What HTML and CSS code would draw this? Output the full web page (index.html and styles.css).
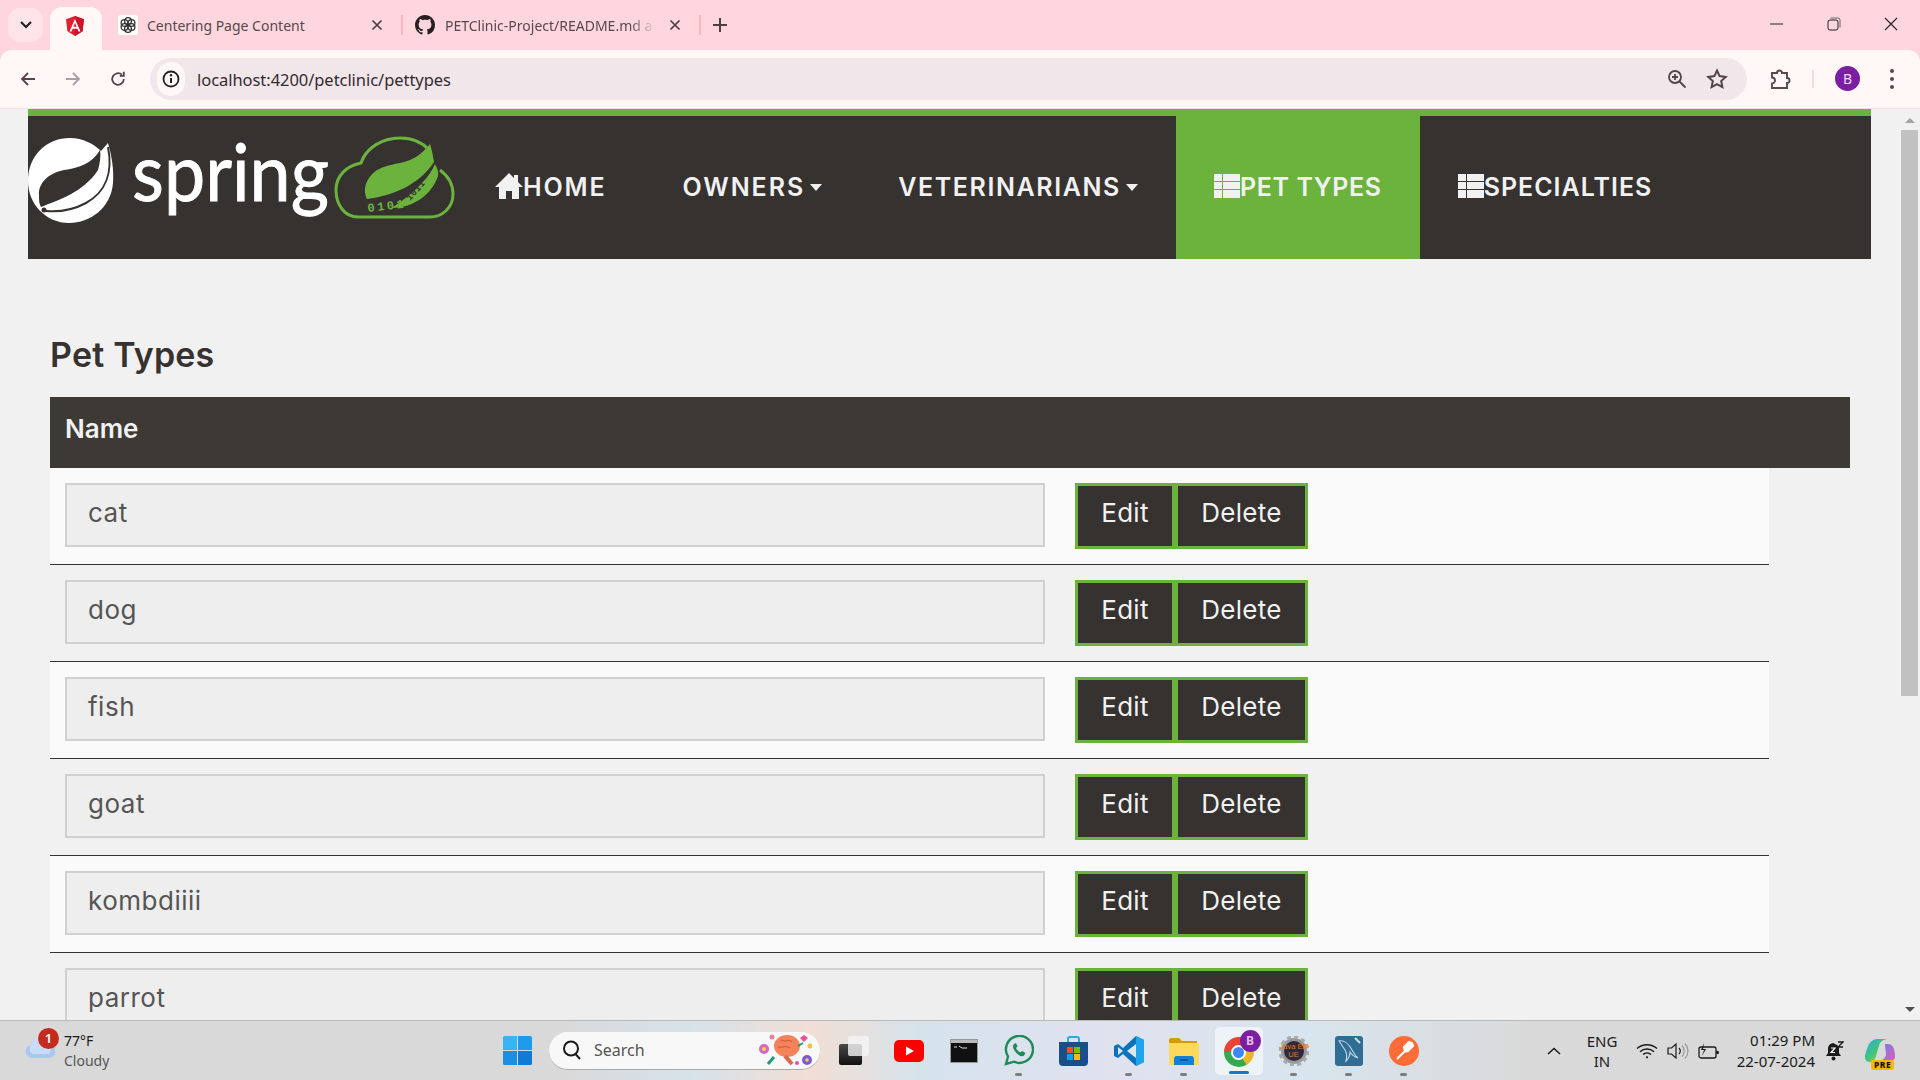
FILE: index.html
```html
<!DOCTYPE html>
<html lang="en">
<head>
<meta charset="utf-8">
<title>PetClinic</title>
<link rel="stylesheet" href="styles.css">
</head>
<body>
<div class="tabstrip">
  <div class="tab-menu"><svg width="14" height="10" viewBox="0 0 14 10"><path d="M2 2l5 5 5-5" fill="none" stroke="#222" stroke-width="2.2"/></svg></div>
  <div class="tab-active"><svg width="22" height="22" viewBox="0 0 22 22"><path d="M11 1L2 4.200l1.400 12L11 21l7.600-4.800 1.400-12z" fill="#e0202f"/><path d="M11 1v20l7.600-4.800 1.400-12z" fill="#c9142b"/><path d="M11 4L5.500 16.500h2l1.100-2.800h4.800l1.100 2.800h2zM9.400 11.800L11 8l1.600 3.800z" fill="#fff"/></svg></div>
  <div class="tab tab-chat">
    <span class="favicon-white"><svg width="18" height="18" viewBox="0 0 18 18" fill="none" stroke="#333" stroke-width="1.300"><circle cx="9" cy="5" r="3.400"/><circle cx="5.500" cy="7" r="3.400"/><circle cx="5.500" cy="11" r="3.400"/><circle cx="9" cy="13" r="3.400"/><circle cx="12.500" cy="11" r="3.400"/><circle cx="12.500" cy="7" r="3.400"/></svg></span>
    <span class="tab-title">Centering Page Content</span>
    <svg class="tab-x" width="12" height="12" viewBox="0 0 12 12"><path d="M1.500 1.500l9 9M10.500 1.500l-9 9" stroke="#4a3f42" stroke-width="1.700"/></svg>
  </div>
  <span class="tab-sep"></span>
  <div class="tab tab-git">
    <svg width="20" height="20" viewBox="0 0 16 16"><path fill="#241f21" d="M8 0C3.580 0 0 3.580 0 8c0 3.540 2.290 6.530 5.470 7.590.4.070.55-.17.55-.38 0-.19-.01-.82-.01-1.490-2.010.37-2.530-.49-2.690-.94-.09-.23-.48-.94-.82-1.130-.28-.15-.68-.52-.01-.53.63-.01 1.080.58 1.230.82.72 1.210 1.870.87 2.330.66.070-.52.28-.87.51-1.070-1.780-.2-3.640-.89-3.640-3.950 0-.87.31-1.590.82-2.150-.08-.2-.36-1.020.08-2.120 0 0 .67-.21 2.200.82.64-.18 1.320-.27 2-.27s1.360.09 2 .27c1.530-1.040 2.200-.82 2.200-.82.44 1.100.16 1.920.08 2.120.51.56.82 1.270.82 2.150 0 3.070-1.870 3.750-3.650 3.950.29.25.54.73.54 1.480 0 1.070-.01 1.930-.01 2.200 0 .21.15.46.55.38A8.010 8.010 0 0016 8c0-4.420-3.580-8-8-8z"/></svg>
    <span class="tab-title tab-title-fade">PETClinic-Project/README.md a</span>
    <svg class="tab-x" width="12" height="12" viewBox="0 0 12 12"><path d="M1.500 1.500l9 9M10.500 1.500l-9 9" stroke="#4a3f42" stroke-width="1.700"/></svg>
  </div>
  <span class="tab-sep"></span>
  <svg class="tab-plus" width="14" height="14" viewBox="0 0 14 14"><path d="M7 0v14M0 7h14" stroke="#4a3f42" stroke-width="2"/></svg>
  <div class="window-controls">
    <span class="win-btn"><svg width="14" height="2" viewBox="0 0 14 2"><path d="M0 1h13" stroke="#222" stroke-width="1"/></svg></span>
    <span class="win-btn"><svg width="14" height="14" viewBox="0 0 14 14" fill="none" stroke="#222"><rect x="1" y="3" width="10" height="10" rx="2"/><path d="M3.500 1H11a2 2 0 012 2v7.500" stroke="#666"/></svg></span>
    <span class="win-btn"><svg width="14" height="14" viewBox="0 0 14 14"><path d="M1 1l12 12M13 1L1 13" stroke="#222" stroke-width="1.100"/></svg></span>
  </div>
</div>

<div class="toolbar">
  <span class="tool-btn"><svg width="18" height="18" viewBox="0 0 18 18" fill="none" stroke="#534448" stroke-width="1.800"><path d="M16 9H3M9 3L3 9l6 6"/></svg></span>
  <span class="tool-btn"><svg width="18" height="18" viewBox="0 0 18 18" fill="none" stroke="#a89fa1" stroke-width="1.800"><path d="M2 9h13M9 3l6 6-6 6"/></svg></span>
  <span class="tool-btn"><svg width="18" height="18" viewBox="0 0 18 18" fill="none" stroke="#534448" stroke-width="1.800"><path d="M14.800 9a5.800 5.800 0 11-1.900-4.300"/><path d="M14.800 1.800v4h-4" stroke-width="1.800"/></svg></span>
  <div class="omnibox">
    <span class="site-info"><svg width="18" height="18" viewBox="0 0 18 18"><circle cx="9" cy="9" r="7.500" fill="none" stroke="#222" stroke-width="1.800"/><path d="M9 8v5" stroke="#222" stroke-width="2"/><circle cx="9" cy="5.300" r="1.200" fill="#222"/></svg></span>
    <span class="url">localhost:4200/petclinic/pettypes</span>
    <span class="omni-right">
      <svg width="20" height="20" viewBox="0 0 20 20" fill="none" stroke="#534448" stroke-width="1.800"><circle cx="8" cy="8" r="6"/><path d="M12.500 12.500l6 6M8 5v6M5 8h6"/></svg>
      <svg width="22" height="22" viewBox="0 0 22 22" fill="none" stroke="#534448" stroke-width="2"><path d="M11 2.500l2.600 5.600 6.100.8-4.500 4.200 1.200 6.100L11 16.200l-5.400 3 1.200-6.100-4.500-4.200 6.100-.8z"/></svg>
    </span>
  </div>
  <span class="ext-btn"><svg width="22" height="22" viewBox="0 0 22 22" fill="none" stroke="#5a474b" stroke-width="1.900"><path d="M3 5h5a2.500 2.500 0 015 0h5v5a2.500 2.500 0 010 5v5H3v-4.500a3 3 0 000-6z"/></svg></span>
  <span class="tool-sep"></span>
  <span class="avatar">B</span>
  <span class="menu-btn"><i></i><i></i><i></i></span>
</div>

<div class="viewport">
  <div class="page">
    <nav class="navbar">
      <a class="brand">
        <svg width="429" height="143" viewBox="0 0 429 143">
          <g transform="translate(0 22)">
            <path fill="#fff" d="M80 5C84 19 86 32 85 45C83 70 62 85 41 85C18 85 0 66 0 43C0 18 18 0 42 0C55 0 66 6 73 13Z"/>
            <path fill="#363230" d="M72 12C64 26 50 30 36 32C20 35 10 46 11 57C11 62 11 66 13 69C30 62 55 55 70 32C72 25 73 18 72 12Z"/>
            <path fill="none" stroke="#363230" stroke-width="2" d="M80 9C85 34 78 54 58 65C45 72 30 74 18 73"/>
            <circle cx="16" cy="72" r="2.500" fill="#363230"/>
          </g>
          <text class="logo-word" x="104" y="85" textLength="197" lengthAdjust="spacingAndGlyphs">spring</text>
          <path fill="none" stroke="#6cb33e" stroke-width="3" d="M402 101H330C316 101 308 88 308 74C308 60 318 50 333 47C338 32 354 22 372 22C384 22 394 26 401 34M412 54C420 60 425 68 425 78C425 92 414 101 402 101"/>
          <path fill="#6cb33e" d="M402 28C394 38 386 44 372 47C358 50 344 52 338 68C336 74 337 79 339 83C365 80 392 68 406 46C405 40 404 34 402 28Z"/>
          <path fill="#6cb33e" d="M407 48C398 68 378 82 364 92C386 92 404 78 410 60C411 56 409 52 407 48Z"/>
          <text class="logo-bits logo-bits-green" x="340" y="96" transform="rotate(-7 340 96)">0101</text>
          <text class="logo-bits logo-bits-dark" x="382" y="85" transform="rotate(-48 382 85)">1011</text>
        </svg>
      </a>
      <a class="nav-link">
        <svg class="nav-icon" width="28" height="28" viewBox="0 0 28 28"><path fill="#f1f1f1" d="M14 1L0 15h4v12h7v-8h6v8h7V15h4l-5-5V3h-4v3z"/></svg>
        <span class="label label-home">HOME</span>
      </a>
      <a class="nav-link"><span class="label label-owners">OWNERS</span><i class="caret"></i></a>
      <a class="nav-link"><span class="label label-vets">VETERINARIANS</span><i class="caret"></i></a>
      <a class="nav-link nav-link-active">
        <svg class="nav-icon" width="26" height="24" viewBox="0 0 26 24"><path fill="#f1f1f1" d="M0 0h8v7H0zM9 0h17v7H9zM0 8h8v7H0zM9 8h17v7H9zM0 16h8v8H0zM9 16h17v8H9z"/></svg>
        <span class="label label-pets">PET TYPES</span>
      </a>
      <a class="nav-link">
        <svg class="nav-icon" width="26" height="24" viewBox="0 0 26 24"><path fill="#f1f1f1" d="M0 0h8v7H0zM9 0h17v7H9zM0 8h8v7H0zM9 8h17v7H9zM0 16h8v8H0zM9 16h17v8H9z"/></svg>
        <span class="label label-spec">SPECIALTIES</span>
      </a>
    </nav>

    <main class="content">
      <h2 class="title">Pet Types</h2>
      <div class="table-head">Name</div>
      <div class="row"><div class="field">cat</div><div class="actions"><button class="btn btn-edit">Edit</button><button class="btn btn-delete">Delete</button></div></div>
      <div class="row"><div class="field">dog</div><div class="actions"><button class="btn btn-edit">Edit</button><button class="btn btn-delete">Delete</button></div></div>
      <div class="row"><div class="field">fish</div><div class="actions"><button class="btn btn-edit">Edit</button><button class="btn btn-delete">Delete</button></div></div>
      <div class="row"><div class="field">goat</div><div class="actions"><button class="btn btn-edit">Edit</button><button class="btn btn-delete">Delete</button></div></div>
      <div class="row"><div class="field">kombdiiii</div><div class="actions"><button class="btn btn-edit">Edit</button><button class="btn btn-delete">Delete</button></div></div>
      <div class="row"><div class="field">parrot</div><div class="actions"><button class="btn btn-edit">Edit</button><button class="btn btn-delete">Delete</button></div></div>
    </main>
  </div>
  <div class="scrollbar">
    <i class="arrow-up"></i>
    <i class="thumb"></i>
    <i class="arrow-down"></i>
  </div>
</div>

<footer class="taskbar">
  <div class="weather">
    <svg class="weather-icon" width="30" height="24" viewBox="0 0 30 24"><path fill="#a9c8f0" d="M7 23a6.500 6.500 0 01-1-12.900A9 9 0 0123 8a7.500 7.500 0 011 15z"/><path fill="#c9dcf6" d="M7 19a6.500 6.500 0 01-1-9A9 9 0 0123 8a7.500 7.500 0 011 11z"/></svg>
    <span class="weather-badge">1</span>
    <div class="weather-text"><span class="temp">77°F</span><span class="cond">Cloudy</span></div>
  </div>
  <span class="slot"><svg width="29" height="29" viewBox="0 0 29 29"><path fill="#35b6f2" d="M0 1.500A1.500 1.500 0 011.500 0H14v14H0z"/><path fill="#1e9bea" d="M15 0h12.500A1.500 1.500 0 0129 1.500V14H15z"/><path fill="#1a8fe3" d="M0 15h14v14H1.500A1.500 1.500 0 010 27.500z"/><path fill="#0f7bd4" d="M15 15h14v12.500a1.500 1.500 0 01-1.500 1.500H15z"/></svg></span>
  <div class="search">
    <svg width="22" height="22" viewBox="0 0 22 22" fill="none" stroke="#1a1a1a" stroke-width="2"><circle cx="10" cy="9.500" r="7"/><path d="M14.500 15l4.500 5"/></svg>
    <span class="search-text">Search</span>
    <svg class="search-art" width="54" height="36" viewBox="0 0 54 36">
      <circle cx="6" cy="17" r="5" fill="#d765c9"/><circle cx="6" cy="17" r="2" fill="#f7d34f"/>
      <circle cx="14" cy="5" r="2.500" fill="#ee7fa0"/>
      <path d="M10 32l6-7" stroke="#1e9a7a" stroke-width="3"/>
      <ellipse cx="29" cy="14" rx="13" ry="11" fill="#f4835c"/><path d="M27 24l7 8" stroke="#d96a48" stroke-width="4"/>
      <path d="M23 8c4 3 8-2 11 2M20 15c5 1 7-2 12 1" stroke="#d8603c" stroke-width="1.300" fill="none"/>
      <path d="M46 3l4 3-4 4-4-4z" fill="#ef4f9c"/><path d="M40 14l5-3" stroke="#1e9a7a" stroke-width="2"/>
      <circle cx="52" cy="14" r="2.500" fill="#f0c040"/>
      <circle cx="49" cy="28" r="5" fill="#7c5bd6"/><circle cx="49" cy="28" r="1.800" fill="#f7d34f"/>
      <circle cx="39" cy="31" r="2" fill="#ef4f9c"/>
    </svg>
  </div>
  <div class="apps">
    <span class="slot"><span class="taskview"><i class="tv-back"></i><i class="tv-front"></i></span></span>
    <span class="slot"><svg width="30" height="22" viewBox="0 0 30 22"><rect width="30" height="22" rx="5" fill="#f00"/><path d="M12 6.500v9l8-4.500z" fill="#fff"/></svg></span>
    <span class="slot"><svg width="28" height="24" viewBox="0 0 28 24"><rect x=".5" y=".5" width="27" height="23" fill="#111" stroke="#999"/><rect x="1" y="1" width="26" height="3" fill="#bbb"/><path d="M4 8h3M9 7l3 2h5" stroke="#ddd" stroke-width="1" fill="none"/></svg></span>
    <span class="slot slot-open"><svg width="30" height="31" viewBox="0 0 30 31" fill="none"><path d="M2 29l2-7.500A13.500 13.500 0 1110 26.700z" stroke="#1f8a55" stroke-width="2.400"/><path d="M10 9c-2 2-1 5 2 8.500s6 4.500 8 3l1.500-2.500-3.500-2-1.500 1.500c-2-.8-3.800-2.800-4.500-4.500l1.500-1.500L12 8z" fill="#1f8a55"/></svg></span>
    <span class="slot"><svg width="29" height="30" viewBox="0 0 29 30"><path d="M9 7V3a2 2 0 012-2h7a2 2 0 012 2v4" fill="none" stroke="#2aa7e8" stroke-width="2"/><path d="M0 6h29v20a4 4 0 01-4 4H4a4 4 0 01-4-4z" fill="#174f86"/><rect x="8" y="11" width="6" height="6" fill="#f25022"/><rect x="15" y="11" width="6" height="6" fill="#7fba00"/><rect x="8" y="18" width="6" height="6" fill="#00a4ef"/><rect x="15" y="18" width="6" height="6" fill="#ffb900"/></svg></span>
    <span class="slot slot-open"><svg width="30" height="30" viewBox="0 0 30 30"><path d="M22 0l8 4v22l-8 4-13-12-5 4-4-2V10l4-2 5 4z" fill="#0a72bd"/><path d="M22 0l8 4v22l-8 4z" fill="#21a4ee"/><path d="M4 11l5 4-5 4z M22 8v14l-9-7z" fill="#dfe7ee"/></svg></span>
    <span class="slot slot-open"><svg width="30" height="28" viewBox="0 0 30 28"><path d="M0 3a2 2 0 012-2h8l3 3h15v6H0z" fill="#d99a00"/><path d="M0 6h28a2 2 0 012 2v18a2 2 0 01-2 2H2a2 2 0 01-2-2z" fill="#fdd95b"/><path d="M5 28v-6a3 3 0 013-3h14a3 3 0 013 3v6z" fill="#1680d6"/><path d="M11 23h8" stroke="#0a4f8e" stroke-width="1.500"/></svg></span>
    <span class="slot slot-chrome">
      <span class="chrome-logo"><i class="chrome-core"></i></span>
      <span class="chrome-badge">B</span>
    </span>
    <span class="slot slot-open"><span class="javaee"><svg class="gear" width="30" height="30" viewBox="0 0 30 30"><circle cx="15" cy="15" r="11.500" fill="#2e2a3e" stroke="#999" stroke-width="3"/><circle cx="15" cy="15" r="14" fill="none" stroke="#aaa" stroke-width="3" stroke-dasharray="4 3.300"/></svg><span class="javaee-text">Java EE<br>UE</span></span></span>
    <span class="slot slot-open"><svg width="28" height="30" viewBox="0 0 28 30"><rect width="28" height="30" rx="3" fill="#2f6d95"/><path d="M4 5c5-1 10 3 13 9 2 3 3 6 6 8-4-1-6-3-8-6 0 4-2 7-4 9 1-4 1-8-1-11C8 11 6 8 4 5z" fill="none" stroke="#c7dbe7" stroke-width="1.100"/><path d="M20 2l5 5" stroke="#cfe0ea" stroke-width="2"/></svg></span>
    <span class="slot slot-open"><svg width="30" height="30" viewBox="0 0 30 30"><circle cx="15" cy="15" r="15" fill="#ff6c37"/><path d="M8 23l9-9M15 11l5-5 3 1 1 3-5 5-3 .5z" stroke="#fff" stroke-width="2" fill="#fff"/></svg></span>
  </div>
  <div class="tray">
    <svg class="tray-caret" width="14" height="8" viewBox="0 0 14 8"><path d="M1 7l6-5.500L13 7" fill="none" stroke="#1a1a1a" stroke-width="1.500"/></svg>
    <div class="lang"><span>ENG</span><span>IN</span></div>
    <svg class="tray-wifi" width="22" height="16" viewBox="0 0 22 16" fill="none" stroke="#1a1a1a" stroke-width="1.400"><path d="M1 5.500a15 15 0 0120 0M4 8.700a10.500 10.500 0 0114 0M7 11.600a6 6 0 018 0"/><circle cx="11" cy="14.300" r="1.100" fill="#1a1a1a" stroke="none"/></svg>
    <svg class="tray-vol" width="22" height="18" viewBox="0 0 22 18" fill="none" stroke="#1a1a1a" stroke-width="1.200"><path d="M1 6h3.500L9 2v14l-4.500-4H1z"/><path d="M12 6a4.500 4.500 0 010 6"/><path d="M15 3.500a8 8 0 010 11M18 1.500a11 11 0 010 15" stroke="#999"/></svg>
    <svg class="tray-batt" width="22" height="18" viewBox="0 0 22 18" fill="none" stroke="#1a1a1a" stroke-width="1.300"><rect x="1" y="5" width="17" height="11" rx="2"/><path d="M19.500 9v3" stroke-width="2.500"/><path d="M6 1L3 8h3l-2 6 4-7H5z" fill="#1a1a1a" stroke="none"/></svg>
    <div class="clock"><span>01:29 PM</span><span>22-07-2024</span></div>
    <svg class="tray-bell" width="18" height="20" viewBox="0 0 18 20"><path d="M7 2a6 6 0 00-5 6v4l-2 3h15l-2-3V9a5 5 0 00-2-5z" fill="#1a1a1a"/><circle cx="7.500" cy="17.500" r="2" fill="#1a1a1a"/><path d="M5 7h4l-4 4.500h4" stroke="#fff" fill="none" stroke-width="1.200"/><path d="M12 1h5l-5 5h5" stroke="#1a1a1a" fill="none" stroke-width="1.300"/></svg>
    <span class="copilot">
      <svg width="30" height="24" viewBox="0 0 30 24"><defs><linearGradient id="cp1" x1="0" y1="0" x2="1" y2="1"><stop offset="0" stop-color="#28a8ea"/><stop offset=".5" stop-color="#3fc67a"/><stop offset="1" stop-color="#f2c13a"/></linearGradient><linearGradient id="cp2" x1="0" y1="0" x2="1" y2="1"><stop offset="0" stop-color="#6a7cf0"/><stop offset="1" stop-color="#e45fb0"/></linearGradient></defs><path d="M12 0h10c-5 1-7 3-8 7l-3 10c-1 4-3 6-6 6-4 0-6-3-5-7l3-9C5 3 8 0 12 0z" fill="url(#cp1)"/><path d="M20 5h3c3 0 5 2 6 5l1 5c1 4-1 7-5 7H15c3-1 5-3 6-6z" fill="url(#cp2)"/></svg>
      <span class="pre-badge">PRE</span>
    </span>
  </div>
</footer>
</body>
</html>
```
FILE: styles.css
```css
* { box-sizing: border-box; }
html, body { margin: 0; padding: 0; }
body {
  width: 1920px;
  height: 1080px;
  overflow: hidden;
  display: flex;
  flex-direction: column;
  font-family: "Noto Sans", "Open Sans", sans-serif;
  background: #ffd6de;
  color: #222;
}
svg { display: block; flex: none; }

/* Browser tab strip */
.tabstrip { height: 50px; flex: none; display: flex; align-items: center; padding-left: 8px; background: #ffd6de; }
.tab-menu { width: 35px; height: 34px; border-radius: 12px; background: #ffe4e9; display: flex; align-items: center; justify-content: center; }
.tab-active { width: 52px; height: 43px; margin-left: 7px; align-self: flex-end; border-radius: 12px 12px 0 0; background: #fff8f6; display: flex; align-items: center; justify-content: center; padding: 0 2px 6px 0; }
.tab { display: flex; align-items: center; height: 36px; }
.tab-chat { width: 299px; padding: 0 14px 0 16px; }
.tab-git { width: 296px; padding: 0 14px 0 12px; }
.favicon-white { width: 20px; height: 20px; background: #fff; border-radius: 3px; display: flex; align-items: center; justify-content: center; }
.tab-title { flex: 1; min-width: 0; margin-left: 9px; font-size: 14px; color: #55494c; white-space: nowrap; overflow: hidden; }
.tab-git .tab-title { margin-left: 10px; }
.tab-title-fade { -webkit-mask-image: linear-gradient(90deg, #000 88%, transparent 100%); mask-image: linear-gradient(90deg, #000 88%, transparent 100%); margin-right: 10px; }
.tab-x { margin: 0 4px; }
.tab-sep { width: 2px; height: 20px; background: #f6b7c2; flex: none; }
.tab-plus { margin-left: 12px; }
.window-controls { margin-left: auto; display: flex; height: 48px; align-self: flex-start; padding-right: 1px; }
.win-btn { width: 57px; display: flex; align-items: center; justify-content: center; }

/* Browser toolbar */
.toolbar { height: 59px; flex: none; display: flex; align-items: center; padding: 0 0 1px 5px; background: #fff8f6; border-bottom: 1px solid #fbdfe2; border-radius: 12px 12px 0 0; }
.tool-btn { width: 45px; display: flex; align-items: center; justify-content: center; }
.omnibox { width: 1597px; height: 42px; margin-left: 10px; border-radius: 21px; background: #f1e6ea; display: flex; align-items: center; padding: 0 19px 0 7px; }
.site-info { width: 28px; height: 34px; border-radius: 17px; background: #fff8f6; display: flex; align-items: center; justify-content: center; }
.url { margin-left: 12px; padding-top: 1px; font-size: 16.500px; letter-spacing: -.05px; color: #342b30; }
.omni-right { margin-left: auto; display: flex; align-items: center; gap: 19px; }
.ext-btn { margin-left: 22px; }
.tool-sep { width: 2px; height: 18px; margin-left: 21px; background: #fbd7dd; }
.avatar { width: 25px; height: 25px; margin-left: 21px; border-radius: 50%; background: #7b1fa2; color: #f3d8f6; font-size: 14px; line-height: 25px; text-align: center; }
.menu-btn { margin-left: 30px; display: flex; flex-direction: column; gap: 4px; }
.menu-btn i { width: 4px; height: 4px; border-radius: 50%; background: #5a474b; }

/* Page viewport */
.viewport { flex: 1; min-height: 0; display: flex; background: #f1f1f1; overflow: hidden; }
.page { flex: 1; min-width: 0; padding: 0 29px 0 28px; overflow: hidden; font-family: Inter, "Open Sans", sans-serif; }
.scrollbar { width: 20px; flex: none; display: flex; flex-direction: column; align-items: center; padding: 9px 2px 8px 1px; }
.arrow-up { width: 0; height: 0; border: 5px solid transparent; border-top: 0; border-bottom: 5px solid #a3a3a3; }
.thumb { width: 17px; height: 566px; margin-top: 7px; background: #c1c1c1; }
.arrow-down { width: 0; height: 0; margin-top: auto; border: 5px solid transparent; border-bottom: 0; border-top: 5px solid #505050; }

/* Navbar */
.navbar { height: 150px; display: flex; background: #363230; border-top: 7px solid #6cb33e; }
.brand { width: 429px; flex: none; }
.logo-word { font-family: Lato, sans-serif; font-size: 80px; font-weight: 400; fill: #fff; stroke: #fff; stroke-width: .9px; }
.logo-bits { font-family: "Liberation Mono", monospace; font-size: 12px; font-weight: 700; letter-spacing: 2.500px; }
.logo-bits-green { fill: #6cb33e; }
.logo-bits-dark { fill: #363230; font-size: 9px; letter-spacing: .5px; }
.nav-link { display: flex; align-items: center; padding: 0 38px 2px; color: #f1f1f1; font-size: 25px; font-weight: 600; white-space: nowrap; }
.nav-link-active { background: #6cb33e; }
.nav-icon { margin-top: -2px; }
.label-home { letter-spacing: 1.850px; }
.label-owners { letter-spacing: 1.950px; }
.label-vets { letter-spacing: 1.600px; }
.label-pets { letter-spacing: .6px; }
.label-spec { letter-spacing: 1px; }
.caret { width: 0; height: 0; margin: 2px 0 0 5px; border: 6.500px solid transparent; border-bottom: 0; border-top: 7px solid #f1f1f1; }

/* Content */
.content { padding: 0 21px 0 22px; }
.title { margin: 76px 0 22px; font-size: 34px; line-height: 40px; font-weight: 600; letter-spacing: .2px; color: #363230; }
.table-head { height: 71px; padding: 14px 15px 0; background: #3d3935; color: #f1f1f1; font-size: 26px; line-height: 36px; font-weight: 600; }
.row { width: 1719px; height: 97px; display: flex; align-items: flex-start; padding: 15px 0 0 15px; background: #fafafa; border-bottom: 1px solid #333; }
.row:nth-of-type(odd) { background: #f1f1f1; }
.field { width: 980px; height: 64px; padding: 0 21px 6px; display: flex; align-items: center; background: #eee; border: 2px solid #d0d0d0; color: #555; font-size: 26px; letter-spacing: .5px; }
.actions { display: flex; margin-left: 30px; }
.btn { height: 66px; padding: 0 0 8px; border: 3px solid #6cb33e; background: #363230; color: #f1f1f1; font-family: Inter, "Open Sans", sans-serif; font-size: 26px; letter-spacing: .3px; }
.btn-edit { width: 100px; }
.btn-delete { width: 133px; }

/* Taskbar */
.taskbar { height: 60px; flex: none; display: flex; align-items: center; border-top: 1px solid #b9b9b9; background: linear-gradient(90deg, #d9d9d9 0, #d9d9d9 560px, #d6e2ea 690px, #f2ded4 810px, #d6e3ec 920px, #e0e2ee 1110px, #d8e5ee 1300px, #d9d9d9 1530px); color: #1a1a1a; }
.weather { width: 490px; flex: none; height: 100%; display: flex; align-items: center; padding-left: 25px; position: relative; }
.weather-icon { margin-top: -8px; }
.weather-badge { position: absolute; left: 38px; top: 7px; width: 21px; height: 21px; border-radius: 50%; background: #c42b1c; color: #fff; font-size: 13px; line-height: 21px; text-align: center; font-weight: 600; }
.weather-text { margin-left: 9px; display: flex; flex-direction: column; font-size: 14px; line-height: 20px; }
.cond { color: #555; }
.slot { width: 55px; height: 48px; flex: none; display: flex; align-items: center; justify-content: center; position: relative; }
.slot-open::after { content: ""; position: absolute; left: 24px; bottom: -1px; width: 7px; height: 3px; border-radius: 2px; background: #7d7d7d; }
.search { width: 271px; height: 38px; margin-left: 4px; flex: none; display: flex; align-items: center; padding: 0 8px 0 12px; border-radius: 19px; background: #f8f8f8; border-bottom: 1px solid #aaa; }
.search-text { margin-left: 11px; font-size: 16px; color: #555; }
.search-art { margin-left: auto; }
.apps { display: flex; margin-left: 6px; }
.taskview { width: 30px; height: 29px; position: relative; display: block; }
.tv-back { position: absolute; left: 0; bottom: 0; width: 23px; height: 21px; border-radius: 2px; background: linear-gradient(#4a4a4a, #111); }
.tv-front { position: absolute; right: 0; top: 0; width: 21px; height: 20px; border-radius: 2px; background: rgba(245,245,245,.8); }
.slot-chrome { background: #eef3f8; border-radius: 5px; margin: 0 3.500px; width: 48px; }
.slot-chrome::after { content: ""; position: absolute; left: 14px; bottom: 1px; width: 20px; height: 3px; border-radius: 2px; background: #0a78d4; }
.chrome-logo { width: 30px; height: 30px; border-radius: 50%; background: conic-gradient(from 30deg, #e9b82a 0 120deg, #36a853 120deg 240deg, #ea4335 240deg 360deg); display: flex; align-items: center; justify-content: center; margin-top: 3px; }
.chrome-core { width: 15px; height: 15px; border-radius: 50%; background: #4285f4; border: 2px solid #fff; }
.chrome-badge { position: absolute; left: 25px; top: 3px; width: 21px; height: 22px; border-radius: 50%; background: #7b1fa2; color: #e3b9ee; font-size: 12px; font-weight: 700; line-height: 22px; text-align: center; }
.javaee { width: 30px; height: 30px; position: relative; display: block; }
.gear { position: absolute; left: 0; top: 0; }
.javaee-text { position: relative; display: block; padding-top: 7px; font-family: "Liberation Sans", sans-serif; font-size: 7.500px; line-height: 8px; color: #e27a15; text-align: center; white-space: nowrap; }
.tray { margin-left: auto; display: flex; align-items: center; height: 100%; position: relative; }
.tray-caret { margin-right: 23px; }
.lang { width: 36px; display: flex; flex-direction: column; align-items: center; font-size: 15px; line-height: 20px; margin-right: 16px; }
.tray-wifi { margin-right: 9px; }
.tray-vol { margin-right: 9px; }
.clock { width: 90px; margin-left: 5px; display: flex; flex-direction: column; align-items: flex-end; font-size: 15px; line-height: 21px; white-space: nowrap; }
.tray-bell { margin-left: 11px; }
.copilot { position: relative; margin: 0 25px 0 21px; display: block; }
.pre-badge { position: absolute; left: 6px; bottom: -7px; padding: 0 3px; border-radius: 2px; background: #f5b800; color: #111; font-size: 8.500px; font-weight: 800; line-height: 10px; letter-spacing: .5px; }
```
